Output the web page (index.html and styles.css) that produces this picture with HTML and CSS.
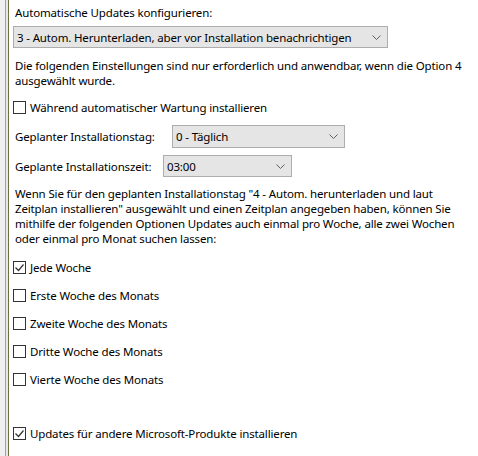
FILE: index.html
```html
<!DOCTYPE html>
<html lang="de">
<head>
    <meta charset="UTF-8">
    <meta name="viewport" content="width=device-width, initial-scale=1.0">
    <title>Automatische Updates konfigurieren</title>
    <link rel="stylesheet" href="styles.css">
</head>
<body>
    <div class="frame">
        <div class="side"></div>
        <div class="content">
            <div class="heading">Automatische Updates konfigurieren:</div>
            <div class="dropdown dd-main">
                <span>3 - Autom. Herunterladen, aber vor Installation benachrichtigen</span>
                <svg class="chev" width="9" height="5" viewBox="0 0 9 5"><path d="M0.5 0.5 L4.5 4.5 L8.5 0.5" fill="none" stroke="#606060"/></svg>
            </div>

            <p class="text t-first">Die folgenden Einstellungen sind nur erforderlich und anwendbar, wenn die Option 4 ausgewählt wurde.</p>

            <div class="check c-wartung">
                <span class="box"></span>
                <span>Während automatischer Wartung installieren</span>
            </div>

            <div class="row r-tag">
                <span class="label l-tag">Geplanter Installationstag:</span>
                <div class="dropdown dd-tag">
                    <span>0 - Täglich</span>
                    <svg class="chev" width="9" height="5" viewBox="0 0 9 5"><path d="M0.5 0.5 L4.5 4.5 L8.5 0.5" fill="none" stroke="#606060"/></svg>
                </div>
            </div>
            <div class="row r-zeit">
                <span class="label l-zeit">Geplante Installationszeit:</span>
                <div class="dropdown dd-zeit">
                    <span>03:00</span>
                    <svg class="chev" width="9" height="5" viewBox="0 0 9 5"><path d="M0.5 0.5 L4.5 4.5 L8.5 0.5" fill="none" stroke="#606060"/></svg>
                </div>
            </div>

            <p class="text t-second">Wenn Sie für den geplanten Installationstag "4 - Autom. herunterladen und laut Zeitplan installieren" ausgewählt und einen Zeitplan angegeben haben, können Sie mithilfe der folgenden Optionen Updates auch einmal pro Woche, alle zwei Wochen oder einmal pro Monat suchen lassen:</p>

            <div class="weeks">
                <div class="check">
                    <span class="box"><svg width="11" height="11" viewBox="0 0 11 11"><path d="M1.5 5.5 L4.5 8.5 L9.5 2.5" fill="none" stroke="#333" stroke-width="1.2"/></svg></span>
                    <span>Jede Woche</span>
                </div>
                <div class="check">
                    <span class="box"></span>
                    <span>Erste Woche des Monats</span>
                </div>
                <div class="check">
                    <span class="box"></span>
                    <span>Zweite Woche des Monats</span>
                </div>
                <div class="check">
                    <span class="box"></span>
                    <span>Dritte Woche des Monats</span>
                </div>
                <div class="check">
                    <span class="box"></span>
                    <span>Vierte Woche des Monats</span>
                </div>
            </div>

            <div class="check c-other">
                <span class="box"><svg width="11" height="11" viewBox="0 0 11 11"><path d="M1.5 5.5 L4.5 8.5 L9.5 2.5" fill="none" stroke="#333" stroke-width="1.2"/></svg></span>
                <span>Updates für andere Microsoft-Produkte installieren</span>
            </div>
        </div>
    </div>
</body>
</html>
```

FILE: styles.css
```css
body {
    margin: 0;
    font-family: "Noto Sans", "Open Sans", sans-serif;
    font-size: 11.5px;
    letter-spacing: -0.15px;
    color: #000;
    background: #fff;
}
.frame {
    display: flex;
    height: 456px;
    overflow: hidden;
}
.side {
    width: 5px;
    background: #f0f0f0;
    border-right: 1px solid #a0a0a0;
    flex-shrink: 0;
}
.content {
    flex: 1;
    border-left: 2px solid #e8e8e8;
    box-shadow: inset 1px 0 0 #6b7048;
    padding-left: 5px;
    padding-top: 5px;
}
.heading {
    line-height: 15px;
    padding-left: 2px;
}
.dropdown {
    display: flex;
    align-items: center;
    justify-content: space-between;
    box-sizing: border-box;
    height: 22px;
    background: #e5e5e5;
    border: 1px solid #adadad;
    padding: 0 6px 0 3px;
    white-space: nowrap;
}
.dd-main {
    width: 375px;
    margin-top: 6px;
}
.chev {
    flex-shrink: 0;
}
.text {
    margin: 0;
    line-height: 15px;
    padding-left: 2px;
    padding-right: 8px;
}
.t-first {
    margin-top: 10px;
}
.check {
    display: flex;
    align-items: center;
    gap: 4px;
    height: 15px;
}
.box {
    width: 13px;
    height: 13px;
    box-sizing: border-box;
    border: 1px solid #333;
    background: #fff;
    display: flex;
    align-items: center;
    justify-content: center;
    flex-shrink: 0;
}
.c-wartung {
    margin-top: 12px;
}
.row {
    display: flex;
    align-items: center;
}
.label {
    padding-left: 2px;
    box-sizing: border-box;
}
.r-tag {
    margin-top: 10px;
}
.r-tag .dropdown {
    height: 23px;
}
.r-zeit {
    margin-top: 7px;
}
.l-tag {
    width: 159px;
}
.l-zeit {
    width: 150px;
}
.dd-tag {
    width: 173px;
}
.dd-zeit {
    width: 129px;
}
.t-second {
    margin-top: 9px;
}
.weeks {
    display: flex;
    flex-direction: column;
    gap: 13px;
    margin-top: 14px;
}
.c-other {
    margin-top: 39px;
}
```
